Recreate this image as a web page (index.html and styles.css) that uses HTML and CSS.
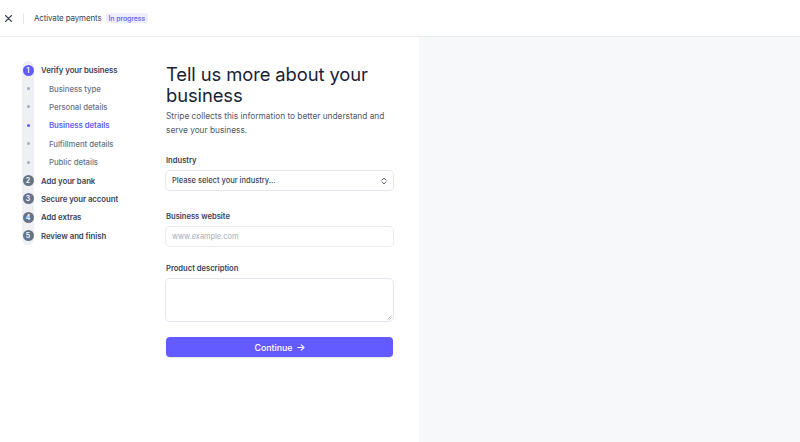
FILE: index.html
```html
<!DOCTYPE html>
<html lang="en">
<head>
<meta charset="utf-8">
<title>Activate payments</title>
<link rel="stylesheet" href="styles.css">
</head>
<body>
<header class="topbar">
  <button class="close" aria-label="Close">
    <svg width="7" height="7" viewBox="0 0 7 7"><path d="M0.5 0.5L6.5 6.5M6.5 0.5L0.5 6.5" stroke="#3c4257" stroke-width="1.1" stroke-linecap="round"/></svg>
  </button>
  <span class="divider"></span>
  <span class="title">Activate payments</span>
  <span class="badge">In progress</span>
</header>
<main class="layout">
  <section class="content">
    <nav class="steps">
      <div class="step first"><span class="track"><span class="num active">1</span></span><span class="step-label">Verify your business</span></div>
      <div class="step sub"><span class="track"><span class="dot"></span></span><span class="sub-label">Business type</span></div>
      <div class="step sub"><span class="track"><span class="dot"></span></span><span class="sub-label">Personal details</span></div>
      <div class="step sub"><span class="track"><span class="dot on"></span></span><span class="sub-label current">Business details</span></div>
      <div class="step sub"><span class="track"><span class="dot"></span></span><span class="sub-label">Fulfillment details</span></div>
      <div class="step sub"><span class="track"><span class="dot"></span></span><span class="sub-label">Public details</span></div>
      <div class="step"><span class="track"><span class="num">2</span></span><span class="step-label">Add your bank</span></div>
      <div class="step"><span class="track"><span class="num">3</span></span><span class="step-label">Secure your account</span></div>
      <div class="step"><span class="track"><span class="num">4</span></span><span class="step-label">Add extras</span></div>
      <div class="step last"><span class="track"><span class="num">5</span></span><span class="step-label">Review and finish</span></div>
    </nav>
    <form class="form">
      <h1 class="heading">Tell us more about your business</h1>
      <p class="lead">Stripe collects this information to better understand and serve your business.</p>
      <label class="label l-industry">Industry</label>
      <div class="select">
        <span>Please select your industry...</span>
        <svg width="6" height="8" viewBox="0 0 6 8"><path d="M1 3L3 1L5 3M1 5L3 7L5 5" fill="none" stroke="#4f566b" stroke-width="0.9" stroke-linecap="round" stroke-linejoin="round"/></svg>
      </div>
      <label class="label l-website">Business website</label>
      <div class="input"><span class="placeholder">www.example.com</span></div>
      <label class="label l-product">Product description</label>
      <div class="textarea">
        <svg class="grip" width="5" height="5" viewBox="0 0 5 5"><path d="M4.5 0.5L0.5 4.5M4.5 2.5L2.5 4.5" stroke="#8792a2" stroke-width="0.6"/></svg>
      </div>
      <button type="button" class="continue">Continue
        <svg width="8" height="7" viewBox="0 0 8 7"><path d="M0.8 3.5H7M4.2 0.8L7 3.5L4.2 6.2" fill="none" stroke="#fff" stroke-width="1.1" stroke-linecap="round" stroke-linejoin="round"/></svg>
      </button>
    </form>
  </section>
  <aside class="side"></aside>
</main>
</body>
</html>
```
FILE: styles.css
```css
* { box-sizing: border-box; }
html, body { margin: 0; padding: 0; height: 100%; }
body {
  font-family: Inter, "Noto Sans", "Liberation Sans", sans-serif;
  color: #3c4257;
  background: #fff;
  display: flex;
  flex-direction: column;
  -webkit-font-smoothing: antialiased;
}
.topbar {
  height: 37px;
  border-bottom: 1px solid #ebeef1;
  display: flex;
  align-items: center;
  padding-left: 5px;
  flex-shrink: 0;
}
.close {
  border: 0; background: none; padding: 0; margin: 0;
  width: 7px; height: 7px; display: flex;
}
.divider {
  width: 1px; height: 11px; background: #e3e8ee;
  margin-left: 11px; margin-right: 10px;
}
.title { font-size: 8px; color: #3c4257; letter-spacing: -0.15px; }
.badge {
  margin-left: 4px;
  font-size: 7px; font-weight: 500;
  color: #635bff; background: #efedff;
  padding: 1.5px 3px; border-radius: 3px; line-height: 7px;
  letter-spacing: -0.1px;
}
.layout { flex: 1; display: flex; min-height: 0; }
.content {
  width: 419px; flex-shrink: 0;
  display: flex;
  padding: 24px 0 0 22px;
}
.side { flex: 1; background: #f6f8fa; }
.steps { width: 144px; flex-shrink: 0; display: flex; flex-direction: column; }
.step { height: 18.4px; display: flex; align-items: center; }
.track {
  width: 12px; height: 100%;
  background: #eef0f3;
  display: flex; align-items: center; justify-content: center;
  flex-shrink: 0;
}
.step.first .track { border-radius: 6px 6px 0 0; }
.step.last .track { border-radius: 0 0 6px 6px; }
.num {
  width: 11px; height: 11px; border-radius: 50%;
  background: #697386; color: #fff;
  font-size: 7px; font-weight: 600;
  display: flex; align-items: center; justify-content: center;
}
.num.active { background: #635bff; }
.dot { width: 3px; height: 3px; border-radius: 50%; background: #a3acb9; }
.dot.on { background: #635bff; }
.step-label { margin-left: 7px; font-size: 7.8px; font-weight: 600; color: #3c4257; letter-spacing: -0.05px; }
.sub-label { margin-left: 15px; font-size: 7.8px; font-weight: 500; color: #697386; letter-spacing: -0.05px; }
.sub-label.current { color: #635bff; font-weight: 600; }
.form { width: 227px; display: flex; flex-direction: column; padding-top: 3px; }
.heading {
  margin: 0; font-size: 18.4px; font-weight: 400; line-height: 21px;
  color: #1a1f36; letter-spacing: -0.1px;
}
.lead { margin: 3px 0 0; font-size: 8.3px; line-height: 14px; color: #4f566b; }
.label { font-size: 7.6px; font-weight: 600; line-height: 12px; color: #3c4257; }
.l-industry { margin-top: 18px; }
.l-website { margin-top: 21px; }
.l-product { margin-top: 17px; }
.select, .input, .textarea {
  margin-top: 4px;
  border-radius: 4px;
  background: #fff;
  box-shadow: 0 0 0 1px #e3e8ee, 0 1px 1px rgba(0,0,0,0.06);
}
.select {
  height: 19px; display: flex; align-items: center; justify-content: space-between;
  padding: 0 6px; font-size: 7.5px; font-weight: 500; color: #3c4257;
}
.input { height: 19px; display: flex; align-items: center; padding: 0 6px; box-shadow: 0 0 0 1px #e8ebef; }
.placeholder { font-size: 7.4px; color: #a3acb9; }
.textarea { height: 42px; position: relative; margin-top: 4px; box-shadow: 0 0 0 1px #e3e8ee; }
.grip { position: absolute; right: 1px; bottom: 1px; }
.continue {
  margin-top: 16px; height: 20px; border: 0; border-radius: 4px;
  background: #635bff; color: #fff;
  font-family: inherit; font-size: 8.8px; font-weight: 500;
  display: flex; align-items: center; justify-content: center; gap: 4px;
  box-shadow: 0 1px 1px rgba(0,0,0,0.1);
}
```
